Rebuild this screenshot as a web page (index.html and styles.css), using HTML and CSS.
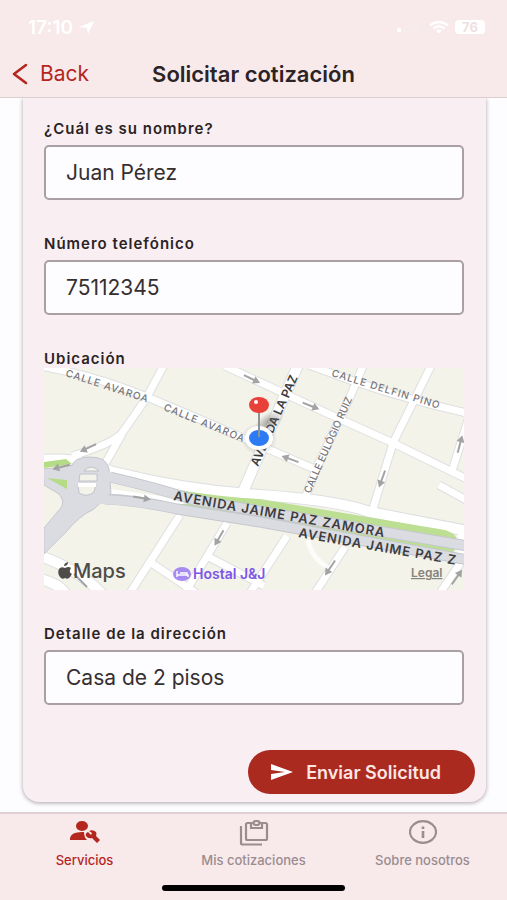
FILE: index.html
```html
<!DOCTYPE html>
<html lang="es">
<head>
    <meta charset="UTF-8">
    <meta name="viewport" content="width=device-width, initial-scale=1.0">
    <title>Solicitar cotización</title>
    <link rel="stylesheet" href="styles.css">
</head>
<body>
    <header class="header">
        <div class="status-bar">
            <div class="status-group">
                <span class="time">17:10</span>
                <svg width="16" height="13" viewBox="0 0 16 13"><path d="M15 0 9 13 8 7 0 6z" fill="#fff"/></svg>
            </div>
            <div class="status-group">
                <svg class="signal" width="26" height="12" viewBox="0 0 26 12">
                    <rect x="0" y="7" width="4" height="4" rx="1" fill="#fff"/>
                    <g fill="#fff" opacity="0.12"><rect x="6" y="5" width="4" height="6" rx="1"/><rect x="12" y="3" width="4" height="8" rx="1"/><rect x="18" y="0" width="4" height="11" rx="1"/></g>
                </svg>
                <svg width="20" height="13" viewBox="0 0 20 13" fill="none" stroke="#fff" stroke-width="2.4">
                    <path d="M1 4.500Q10-2.500 19 4.500M4.500 7.500Q10 3 15.500 7.500"/>
                    <path d="M7 9.500Q10 7.500 13 9.500L10 12.500z" fill="#fff" stroke="none"/>
                </svg>
                <span class="battery">76</span>
            </div>
        </div>
        <nav class="nav-bar">
            <a class="back" href="#">
                <svg width="16" height="22" viewBox="0 0 16 22"><path d="M14 2 2 11l12 9" fill="none" stroke="currentColor" stroke-width="2.600" stroke-linecap="round" stroke-linejoin="round"/></svg>
                Back
            </a>
            <h1 class="title">Solicitar cotización</h1>
        </nav>
    </header>

    <main class="content">
        <form class="card">
            <div class="field">
                <label for="nombre">¿Cuál es su nombre?</label>
                <input type="text" id="nombre" value="Juan Pérez">
            </div>
            <div class="field">
                <label for="telefono">Número telefónico</label>
                <input type="tel" id="telefono" value="75112345">
            </div>
            <div class="field field-map">
                <span class="label">Ubicación</span>
                <div class="map-box">
                    <svg class="map" viewBox="0 0 420 222" preserveAspectRatio="xMidYMid slice">
                        <defs>
                            <g id="arrow"><path d="M-9 0H4" stroke="#a3a3a3" stroke-width="2"/><path d="M9 0 2-4v8z" fill="#a3a3a3"/></g>
                            <radialGradient id="shade"><stop offset="0" stop-color="#555" stop-opacity="0.5"/><stop offset="1" stop-color="#555" stop-opacity="0"/></radialGradient>
                            <g id="streets">
                                <path d="M-4-2Q50 7 103 29T199 70Q240 88 273 102"/>
                                <path d="M120-3 103 29Q88 51 78 65Q68 76 28 88M78 66 61 96"/>
                                <path d="M181-2 276 42 349 75 423 111M265-3Q345 28 423 45"/>
                                <path d="M319-2 306 29 273 99 261 130M387-2 349 75 328 144M424 52 408 103"/>
                                <path d="M136 147 86 225M183 155 141 225M243 168 206 225M301 179 271 225M422 187 396 225"/>
                                <path d="M103 192 152 225M163 188 220 218M395 117 424 133"/>
                            </g>
                        </defs>
                        <rect width="420" height="222" fill="#f3f3ea"/>
                        <use href="#streets" fill="none" stroke="#dedfe0" stroke-width="9"/>
                        <g fill="none" stroke="#dedfe0">
                            <path d="M254-3 198 126" stroke-width="12"/>
                            <path d="M-3 92Q38 89 66 103Q140 122 216 127T326 144L424 163" stroke-width="12"/>
                            <path d="M-4 188Q36 202 59 227M-4 211Q14 215 22 226" stroke-width="12"/>
                        </g>
                        <use href="#streets" fill="none" stroke="#fff" stroke-width="7"/>
                        <g fill="none" stroke="#fff">
                            <path d="M254-3 198 126" stroke-width="10"/>
                            <path d="M-3 92Q38 89 66 103Q140 122 216 127T326 144L424 163" stroke-width="10"/>
                            <path d="M-4 188Q36 202 59 227M-4 211Q14 215 22 226" stroke-width="10"/>
                            <path d="M264 172Q267 190 286 201" stroke-width="5" opacity="0.7"/>
                            <path d="M55 126 145 139M30 118h34" stroke-width="13"/>
                            <path d="M418 157v36" stroke-width="9"/>
                        </g>
                        <path d="M74 109Q150 128 216 131L401 162Q412 165 414 174L408 187 300 168 128 138 150 134z" fill="#bcdf93"/>
                        <g fill="none" stroke="#c5c7ce" stroke-width="11">
                            <path d="M-3 106Q18 105 33 101"/>
                            <path d="M66 109Q110 119 150 132L424 178"/>
                            <path d="M61 131Q92 132 133 141L216 154 424 192"/>
                        </g>
                        <path d="M27 100Q29 89 46 89T65 101L67 125 50 141Q35 148 22 164L0 186V160L16 141Q22 134 15 126L0 117V103z" fill="#dadce1" stroke="#c5c7ce"/>
                        <g fill="none" stroke="#dadce1" stroke-width="9">
                            <path d="M-3 106Q18 105 35 101"/>
                            <path d="M61 108Q110 119 150 132L424 178"/>
                            <path d="M48 131Q92 132 133 141L216 154 424 192"/>
                        </g>
                        <path d="M0 94 22 91 28 96 0 100zM3 110 23 112V121z" fill="#b4dc86"/>
                        <g fill="#f3f3ea" stroke="#bfc2ca">
                            <path d="M40 103Q47 95 55 103z"/>
                            <path d="M36 106h17v7H35z"/>
                            <path d="M34 117h18l-2 7Q43 130 35 125z"/>
                        </g>
                        <path d="M34 117h18" stroke="#fff" stroke-width="4"/>

                        <use href="#arrow" transform="translate(44 80) rotate(155)"/>
                        <use href="#arrow" transform="translate(17 99) rotate(166)"/>
                        <use href="#arrow" transform="translate(208 11) rotate(26)"/>
                        <use href="#arrow" transform="translate(267 38) rotate(22)"/>
                        <use href="#arrow" transform="translate(246 91) rotate(200)"/>
                        <use href="#arrow" transform="translate(338 111) rotate(110)"/>
                        <use href="#arrow" transform="translate(416 76) rotate(-75)"/>
                        <use href="#arrow" transform="translate(98 130) rotate(10)"/>
                        <use href="#arrow" transform="translate(175 170) rotate(120)"/>
                        <use href="#arrow" transform="translate(286 200) rotate(124)"/>
                        <use href="#arrow" transform="translate(413 209) rotate(-55)"/>
                        <path d="M30 206 43 219" stroke="#a3a3a3" stroke-width="2"/>

                        <g class="street-name">
                            <text transform="translate(21 8) rotate(18)">CALLE AVAROA</text>
                            <text transform="translate(119 42) rotate(22)">CALLE AVAROA</text>
                            <text transform="translate(287 8) rotate(17)">CALLE DELFIN PINO</text>
                            <text class="narrow-street" transform="translate(266 126) rotate(-66)">CALLE EULÓGIO RUIZ</text>
                        </g>
                        <g class="avenue-name">
                            <text class="cross-avenue" transform="translate(214 99) rotate(-66)">AVENIDA LA PAZ</text>
                            <text transform="translate(129 132) rotate(10)">AVENIDA JAIME PAZ ZAMORA</text>
                            <text transform="translate(254 169) rotate(10)">AVENIDA JAIME PAZ Z</text>
                        </g>

                        <ellipse cx="225" cy="54" rx="17" ry="9" transform="rotate(-35 225 54)" fill="url(#shade)"/>
                        <ellipse cx="215" cy="71" rx="18" ry="16" fill="url(#shade)"/>
                        <ellipse cx="215" cy="70" rx="14" ry="12" fill="#fff"/>
                        <ellipse cx="215" cy="70" rx="10" ry="8" fill="#2d7bf4"/>
                        <path d="M215 40V69" stroke="#8f9296" stroke-width="2"/>
                        <ellipse cx="215" cy="37" rx="10" ry="8" fill="#e8413a"/>
                        <ellipse cx="212" cy="34" rx="2" ry="2" fill="#fff"/>

                        <path d="M21 200Q17 198 15 201Q13 205 16 209Q18 212 21 210Q24 212 26 209L28 206Q24 204 27 200Q25 198 21 200zM20 198Q20 195 24 194Q24 198 20 198z" fill="#4d4c48"/>
                        <text class="brand" x="29" y="210">Maps</text>
                        <ellipse cx="138" cy="206" rx="9" ry="7" fill="#a78bf0"/>
                        <path d="M133 203v6M133 207h11v2M136 205h7v2" fill="none" stroke="#fff" stroke-width="1.400"/>
                        <text class="place" x="149" y="211">Hostal J&amp;J</text>
                        <a href="#"><text class="legal" x="367" y="209">Legal</text></a>
                    </svg>
                </div>
            </div>
            <div class="field">
                <label for="detalle">Detalle de la dirección</label>
                <input type="text" id="detalle" value="Casa de 2 pisos">
            </div>
            <div class="actions">
                <button type="submit" class="send-btn">
                    <svg width="22" height="16" viewBox="0 0 22 16"><path d="M0 0 22 8 0 16V10L14 8 0 6z" fill="#fff"/></svg>
                    Enviar Solicitud
                </button>
            </div>
        </form>
    </main>

    <footer class="tab-bar">
        <nav class="tabs">
            <a class="tab active" href="#">
                <svg width="30" height="24" viewBox="0 0 30 24" fill="currentColor">
                    <ellipse cx="12" cy="6" rx="6" ry="5"/>
                    <path d="M0 20V18Q1 12 12 12H14Q14 17 17 20z"/>
                    <path d="M18 12 21 15 22 13 19 11Q23 9 26 12Q27 14 26 16L30 20 27 23 22 18Q18 19 16 16Q15 13 18 12z"/>
                </svg>
                Servicios
            </a>
            <a class="tab" href="#">
                <svg width="30" height="26" viewBox="0 0 30 26" fill="none" stroke="currentColor" stroke-width="2.200">
                    <path d="M2 6V23Q2 24.500 4 24.500H23"/>
                    <rect x="7" y="3" width="21" height="17" rx="1.500"/>
                    <path d="M12 3V8H23V3"/>
                    <ellipse cx="17.500" cy="3" rx="3" ry="2" fill="#f8e9eb"/>
                </svg>
                Mis cotizaciones
            </a>
            <a class="tab" href="#">
                <svg width="28" height="24" viewBox="0 0 28 24" fill="none" stroke="currentColor" stroke-width="2.200">
                    <ellipse cx="14" cy="12" rx="13" ry="10.800"/>
                    <path d="M14 11V18M14 6.500V9" stroke-width="2.600"/>
                </svg>
                Sobre nosotros
            </a>
        </nav>
        <div class="home-indicator"></div>
    </footer>
</body>
</html>
```
FILE: styles.css
```css
* {
    box-sizing: border-box;
}
body {
    margin: 0;
    min-height: 100vh;
    display: flex;
    flex-direction: column;
    font-family: Inter, "Liberation Sans", sans-serif;
    background: #fdfcfe;
    color: #2b2324;
}
a {
    color: inherit;
    text-decoration: none;
}
.header {
    background: #f8e9eb;
    border-bottom: 1px solid #dccfd2;
}
.status-bar {
    display: flex;
    justify-content: space-between;
    align-items: center;
    height: 50px;
    padding: 4px 22px 0 28px;
    color: #fff;
}
.status-group {
    display: flex;
    align-items: center;
    gap: 6px;
}
.time {
    font-size: 19px;
    font-weight: 600;
}
.battery {
    width: 30px;
    border-radius: 4px;
    background: #fff;
    color: #f0dfe2;
    font-size: 13px;
    font-weight: 700;
    line-height: 14px;
    text-align: center;
}
.nav-bar {
    display: grid;
    grid-template-columns: 1fr auto 1fr;
    align-items: center;
    height: 47px;
    padding: 0 12px;
}
.back {
    display: flex;
    align-items: center;
    gap: 12px;
    color: #b3271e;
    font-size: 21px;
}
.title {
    margin: 0;
    font-size: 22px;
    font-weight: 600;
}
.content {
    flex: 1;
    padding: 0 21px 10px 23px;
}
.card {
    padding: 23px 22px 8px 21px;
    background: #f9eff2;
    border-radius: 0 0 16px 16px;
    box-shadow: 0 1px 4px #a9a2a6;
    clip-path: inset(0 -6px -6px -6px);
}
.field {
    display: flex;
    flex-direction: column;
    gap: 8px;
    margin-bottom: 36px;
}
.field-map {
    gap: 1px;
}
label, .label {
    font-size: 15px;
    font-weight: 600;
    line-height: 16px;
    letter-spacing: 1px;
}
input {
    width: 100%;
    height: 55px;
    padding: 0 20px;
    border: 2px solid #aaa0a3;
    border-radius: 5px;
    background: #fdfcfe;
    color: #352f31;
    font-family: inherit;
    font-size: 21px;
}
.map {
    display: block;
    width: 100%;
    height: 222px;
}
.street-name {
    fill: #77777a;
    font-size: 10px;
    font-weight: 500;
    letter-spacing: 1px;
}
.narrow-street {
    letter-spacing: 0;
}
.avenue-name {
    fill: #3d3d40;
    font-size: 13px;
    font-weight: 600;
    letter-spacing: 1px;
}
.cross-avenue {
    font-size: 12px;
    letter-spacing: 0;
}
.brand {
    fill: #4d4c48;
    font-size: 20px;
    font-weight: 500;
}
.place {
    fill: #7d55e8;
    font-size: 14px;
    font-weight: 600;
}
.legal {
    fill: #85837d;
    font-size: 12px;
    font-weight: 600;
    text-decoration: underline;
}
.actions {
    display: flex;
    justify-content: flex-end;
    margin: 45px -11px 0 0;
}
.send-btn {
    display: flex;
    align-items: center;
    gap: 13px;
    height: 44px;
    padding: 0 34px 0 23px;
    border: none;
    border-radius: 22px;
    background: #ab2a20;
    color: #fbe6e4;
    font-family: inherit;
    font-size: 18px;
    font-weight: 600;
    cursor: pointer;
}
.tab-bar {
    height: 88px;
    background: #f8e9eb;
    border-top: 2px solid #e0d0d3;
}
.tabs {
    display: grid;
    grid-template-columns: repeat(3, 1fr);
}
.tab {
    display: flex;
    flex-direction: column;
    align-items: center;
    justify-content: space-between;
    height: 54px;
    padding-top: 6px;
    color: #9a8d90;
    font-size: 13px;
    font-weight: 500;
    line-height: 16px;
}
.tab.active {
    color: #b3271e;
}
.home-indicator {
    width: 36%;
    height: 6px;
    margin: 17px auto 0;
    border-radius: 3px;
    background: #000;
}
```
